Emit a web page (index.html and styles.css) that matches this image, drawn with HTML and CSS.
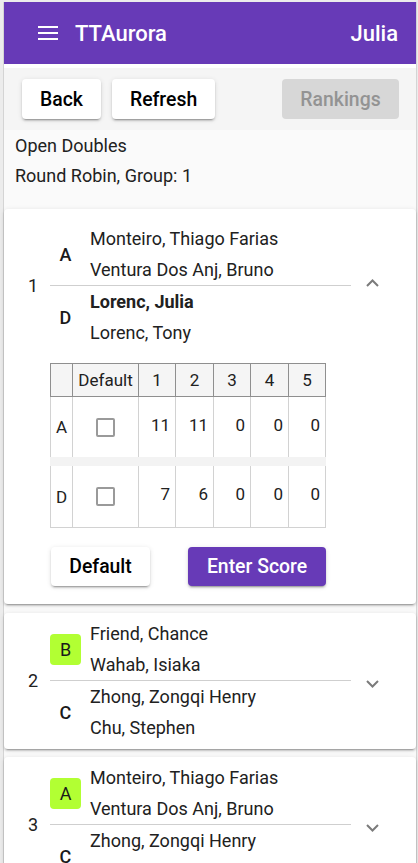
FILE: index.html
```html
<!DOCTYPE html>
<html lang="en">
<head>
<meta charset="utf-8">
<title>TTAurora</title>
<link rel="stylesheet" href="styles.css">
</head>
<body>
<div class="frame">
  <header class="appbar">
    <svg class="menu-icon" width="20" height="14" viewBox="0 0 20 14" aria-hidden="true">
      <rect x="0" y="0" width="20" height="2" fill="#fff"/>
      <rect x="0" y="6" width="20" height="2" fill="#fff"/>
      <rect x="0" y="12" width="20" height="2" fill="#fff"/>
    </svg>
    <span class="brand">TTAurora</span>
    <span class="user">Julia</span>
  </header>
  <div class="spacer"></div>
  <div class="toolbar">
    <div class="toolbar-left">
      <button class="btn btn-raised">Back</button>
      <button class="btn btn-raised">Refresh</button>
    </div>
    <button class="btn btn-disabled" disabled>Rankings</button>
  </div>
  <div class="info">
    <div class="info-line">Open Doubles</div>
    <div class="info-line">Round Robin, Group: 1</div>
  </div>

  <section class="card card-expanded">
    <div class="match-head match-head-expanded">
      <div class="num">1</div>
      <div class="teams">
        <div class="team">
          <div class="letter">A</div>
          <div class="names">
            <div class="name">Monteiro, Thiago Farias</div>
            <div class="name">Ventura Dos Anj, Bruno</div>
          </div>
        </div>
        <div class="divider"></div>
        <div class="team">
          <div class="letter">D</div>
          <div class="names">
            <div class="name name-bold">Lorenc, Julia</div>
            <div class="name">Lorenc, Tony</div>
          </div>
        </div>
      </div>
      <svg class="chev chev-up" width="13" height="8" viewBox="0 0 13 8" aria-hidden="true">
        <polyline points="1,7 6.5,1.5 12,7" fill="none" stroke="#7b7b7b" stroke-width="2"/>
      </svg>
    </div>
    <div class="match-body">
      <div class="score-grid">
        <div class="hcell"></div>
        <div class="hcell">Default</div>
        <div class="hcell">1</div>
        <div class="hcell">2</div>
        <div class="hcell">3</div>
        <div class="hcell">4</div>
        <div class="hcell">5</div>

        <div class="bcell bcell-letter">A</div>
        <div class="bcell bcell-check"><span class="checkbox"></span></div>
        <div class="bcell bcell-num">11</div>
        <div class="bcell bcell-num">11</div>
        <div class="bcell bcell-num">0</div>
        <div class="bcell bcell-num">0</div>
        <div class="bcell bcell-num">0</div>

        <div class="gap-row"></div>

        <div class="bcell bcell-letter bcell-last">D</div>
        <div class="bcell bcell-check bcell-last"><span class="checkbox"></span></div>
        <div class="bcell bcell-num bcell-last">7</div>
        <div class="bcell bcell-num bcell-last">6</div>
        <div class="bcell bcell-num bcell-last">0</div>
        <div class="bcell bcell-num bcell-last">0</div>
        <div class="bcell bcell-num bcell-last">0</div>
      </div>
      <div class="actions">
        <button class="btn btn-raised btn-default">Default</button>
        <button class="btn btn-primary">Enter Score</button>
      </div>
    </div>
  </section>

  <section class="card card-collapsed card-second">
    <div class="match-head">
      <div class="num">2</div>
      <div class="teams">
        <div class="team">
          <div class="letter letter-badge">B</div>
          <div class="names">
            <div class="name">Friend, Chance</div>
            <div class="name">Wahab, Isiaka</div>
          </div>
        </div>
        <div class="divider"></div>
        <div class="team">
          <div class="letter">C</div>
          <div class="names">
            <div class="name">Zhong, Zongqi Henry</div>
            <div class="name">Chu, Stephen</div>
          </div>
        </div>
      </div>
      <svg class="chev chev-down" width="13" height="8" viewBox="0 0 13 8" aria-hidden="true">
        <polyline points="1,1 6.5,6.5 12,1" fill="none" stroke="#7b7b7b" stroke-width="2"/>
      </svg>
    </div>
  </section>

  <section class="card card-collapsed">
    <div class="match-head">
      <div class="num">3</div>
      <div class="teams">
        <div class="team">
          <div class="letter letter-badge">A</div>
          <div class="names">
            <div class="name">Monteiro, Thiago Farias</div>
            <div class="name">Ventura Dos Anj, Bruno</div>
          </div>
        </div>
        <div class="divider"></div>
        <div class="team">
          <div class="letter">C</div>
          <div class="names">
            <div class="name">Zhong, Zongqi Henry</div>
            <div class="name">Chu, Stephen</div>
          </div>
        </div>
      </div>
      <svg class="chev chev-down" width="13" height="8" viewBox="0 0 13 8" aria-hidden="true">
        <polyline points="1,1 6.5,6.5 12,1" fill="none" stroke="#7b7b7b" stroke-width="2"/>
      </svg>
    </div>
  </section>
</div>
</body>
</html>
```

FILE: styles.css
```css
html {
  background: #ececec;
}
body {
  margin: 0;
  font-family: Roboto, "Liberation Sans", Arial, sans-serif;
  color: #212121;
}
.frame {
  margin: 2px 1px 0 3px;
  border-left: 1px solid #d4d4d4;
  border-right: 1px solid #d4d4d4;
  background: #fafafa;
  padding-bottom: 20px;
}
.appbar {
  height: 62px;
  background: #673ab7;
  color: #fff;
  display: flex;
  align-items: center;
  padding: 0 18px 0 34px;
  box-sizing: border-box;
}
.menu-icon {
  display: block;
  flex: none;
}
.brand {
  margin-left: 17px;
  font-size: 22px;
  font-weight: 500;
}
.user {
  margin-left: auto;
  font-size: 22px;
  font-weight: 500;
}
.spacer {
  height: 4px;
  background: #fff;
}
.toolbar {
  height: 62px;
  background: #f5f5f5;
  display: flex;
  align-items: center;
  justify-content: space-between;
  padding: 0 17px 0 18px;
  box-sizing: border-box;
}
.toolbar-left {
  display: flex;
  gap: 11px;
}
.btn {
  font-family: Roboto, "Liberation Sans", Arial, sans-serif;
  font-size: 19.4px;
  font-weight: 500;
  height: 40px;
  padding: 0 18px;
  border: none;
  border-radius: 4px;
  background: #fff;
  color: #000;
  cursor: pointer;
}
.btn-raised {
  box-shadow: 0 3px 1px -2px rgba(0,0,0,.2), 0 2px 2px 0 rgba(0,0,0,.14), 0 1px 5px 0 rgba(0,0,0,.12);
}
.btn-disabled {
  background: #d7d7d7;
  color: #939393;
  width: 117px;
  cursor: default;
}
.btn-primary {
  background: #673ab7;
  color: #fff;
  box-shadow: 0 3px 1px -2px rgba(0,0,0,.2), 0 2px 2px 0 rgba(0,0,0,.14), 0 1px 5px 0 rgba(0,0,0,.12);
  width: 138px;
  height: 39px;
  margin-left: 38px;
}
.info {
  padding: 1px 11px 18px;
}
.info-line {
  font-size: 18px;
  line-height: 30px;
}
.card {
  background: #fff;
  border-radius: 4px;
  box-shadow: 0 3px 1px -2px rgba(0,0,0,.2), 0 2px 2px 0 rgba(0,0,0,.14), 0 1px 5px 0 rgba(0,0,0,.12);
}
.card-expanded {
  margin-bottom: 9px;
  padding-bottom: 18px;
}
.card-second {
  margin-bottom: 8px;
}
.match-head {
  display: flex;
  align-items: center;
  padding: 5px 0 6px 20px;
}
.match-head-expanded {
  padding: 14px 0 14px 20px;
}
.num {
  width: 18px;
  text-align: center;
  font-size: 18px;
}
.teams {
  margin-left: 8px;
  width: 301px;
}
.team {
  display: flex;
  align-items: center;
}
.letter {
  width: 31px;
  height: 31px;
  display: flex;
  align-items: center;
  justify-content: center;
  font-size: 18px;
  font-weight: 500;
  color: #1a1a1a;
  border-radius: 4px;
}
.letter-badge {
  background: #b2ff33;
  font-weight: 400;
}
.names {
  margin-left: 9px;
}
.name {
  font-size: 18px;
  line-height: 31px;
  white-space: nowrap;
}
.name-bold {
  font-weight: 700;
}
.divider {
  height: 1px;
  background: #cfcfcf;
}
.chev {
  display: block;
  margin-left: 15px;
  flex: none;
}
.chev-up {
  margin-bottom: 6px;
}
.chev-down {
  margin-top: 7px;
}
.match-body {
  padding: 1px 0 0 46px;
}
.score-grid {
  display: grid;
  grid-template-columns: 23px 66px 37px 38px 37px 38px 37px;
  width: 276px;
  font-size: 17px;
}
.hcell {
  box-sizing: border-box;
  height: 34px;
  background: #f5f5f5;
  border-top: 1px solid #8f8f8f;
  border-bottom: 1px solid #8f8f8f;
  border-right: 1px solid #8f8f8f;
  display: flex;
  align-items: center;
  justify-content: center;
}
.hcell:first-child {
  border-left: 1px solid #8f8f8f;
}
.bcell {
  box-sizing: border-box;
  height: 60px;
  border-right: 1px solid #d2d2d2;
  display: flex;
  align-items: center;
}
.bcell-last {
  height: 62px;
  border-bottom: 1px solid #d2d2d2;
}
.bcell-letter {
  border-left: 1px solid #d2d2d2;
  padding-left: 5px;
}
.bcell-check {
  justify-content: center;
}
.bcell-num {
  justify-content: flex-end;
  padding-right: 5px;
  padding-bottom: 5px;
}
.gap-row {
  grid-column: 1 / -1;
  height: 9px;
  background: #f3f3f3;
}
.checkbox {
  display: block;
  width: 19px;
  height: 19px;
  box-sizing: border-box;
  border: 2px solid #9a9a9a;
  border-radius: 2px;
}
.actions {
  display: flex;
  padding-left: 1px;
  margin-top: 19px;
}
.btn-default {
  width: 99px;
  height: 39px;
  padding: 0;
}
```
